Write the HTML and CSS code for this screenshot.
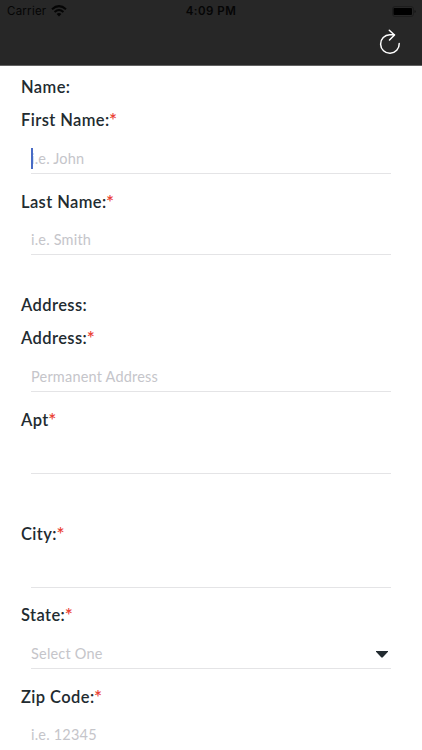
FILE: index.html
```
<!DOCTYPE html>
<html lang="en">
<head>
<meta charset="utf-8">
<title>Name and address</title>
<link rel="stylesheet" href="styles.css">
</head>
<body>
<header class="header">
  <div class="status">
    <div class="carrier"><span>Carrier</span>
      <svg width="16" height="12" viewBox="0 0 16 12" fill="none" stroke="#050505" stroke-width="2"><path d="M1 4.2Q8-2 15 4.2M3.6 7Q8 3 12.4 7"/><path d="M5.6 9Q8 7 10.4 9L8 11.4Z" fill="#050505" stroke="none"/></svg>
    </div>
    <span class="time">4:09 PM</span>
    <svg class="battery" width="24" height="11" viewBox="0 0 24 11"><rect x=".5" y=".5" width="21" height="10" rx="2.5" fill="none" stroke="#1d1d1d"/><rect x="1.5" y="2" width="18.5" height="7" rx="1" fill="#000"/><path d="M22.5 4v3q1.2-.4 1.2-1.5T22.5 4" fill="#151515"/></svg>
  </div>
  <div class="toolbar">
    <svg width="22" height="26" viewBox="0 0 22 26" fill="none" stroke="#fff" stroke-width="1.5" stroke-linecap="round" stroke-linejoin="round"><path d="M20.2 14.6A9.3 9.3 0 1 1 10.8 5.7H15.5M10.3 1.2 15.5 6 10.5 11"/></svg>
  </div>
</header>
<main class="form">
  <section class="section">
    <h2 class="label">Name:</h2>
    <div class="field first"><div class="label">First Name:<b>*</b></div><div class="input focused">i.e. John</div></div>
    <div class="field last"><div class="label">Last Name:<b>*</b></div><div class="input">i.e. Smith</div></div>
  </section>
  <section class="section">
    <h2 class="label">Address:</h2>
    <div class="field first"><div class="label">Address:<b>*</b></div><div class="input">Permanent Address</div></div>
    <div class="field"><div class="label">Apt<b>*</b></div><div class="input"></div></div>
  </section>
  <section class="section city">
    <div class="field"><div class="label">City:<b>*</b></div><div class="input"></div></div>
    <div class="field state"><div class="label">State:<b>*</b></div><div class="input select"><span>Select One</span><svg width="12" height="7" viewBox="0 0 12 7"><path d="M0 0H12V.8L6.6 6.4H5.4L0 .8Z" fill="#222b30"/></svg></div></div>
    <div class="field zip"><div class="label">Zip Code:<b>*</b></div><div class="input">i.e. 12345</div></div>
  </section>
</main>
</body>
</html>
```
FILE: styles.css
```
* { box-sizing: border-box; }
html, body { height: 100%; }
body { margin: 0; overflow: hidden; background: #fff; font-family: Lato, "Open Sans", sans-serif; }
.header { height: 66px; background: #272727; border-bottom: 1px solid #626262; }
.status { height: 22px; display: grid; grid-template-columns: 1fr auto 1fr; align-items: center; padding: 0 6px 0 7px; font: 11.5px Inter, sans-serif; color: #050505; }
.carrier { display: flex; align-items: center; gap: 5px; letter-spacing: .25px; }
.time { font-weight: 600; letter-spacing: .5px; margin-left: -1px; }
.battery { justify-self: end; }
.toolbar { display: flex; justify-content: flex-end; padding: 7px 21px 0 0; }
.form { height: 684px; overflow: hidden; padding-top: 9px; }
.section { margin-bottom: 38px; }
.label { height: 22px; margin: 0 0 0 21px; font-size: 16.5px; line-height: 24px; font-weight: 600; letter-spacing: .4px; color: #222b30; white-space: nowrap; }
.label b { color: #ea4335; font-size: 19px; line-height: 1px; font-weight: 600; letter-spacing: 0; position: relative; top: 1px; left: -.5px; }
.field { margin-top: 16px; }
.field.first { margin-top: 11px; }
.input { height: 44px; margin: 0 31px; border-bottom: 1px solid #e4e4e6; padding-top: 19px; font-size: 14.5px; line-height: 20px; letter-spacing: .2px; color: #c5c5ca; position: relative; }
.last .input { height: 43px; padding-top: 18px; }
.focused::before { content: ""; position: absolute; left: 0; top: 18px; width: 2px; height: 21px; background: #496bc5; }
.select { display: flex; justify-content: space-between; align-items: center; padding-top: 15px; }
.select svg { margin-right: 3px; }
.city { margin-top: 48px; }
.state { margin-top: 15px; }
.zip { margin-top: 16px; }
.zip .input { padding-top: 18px; }
```
